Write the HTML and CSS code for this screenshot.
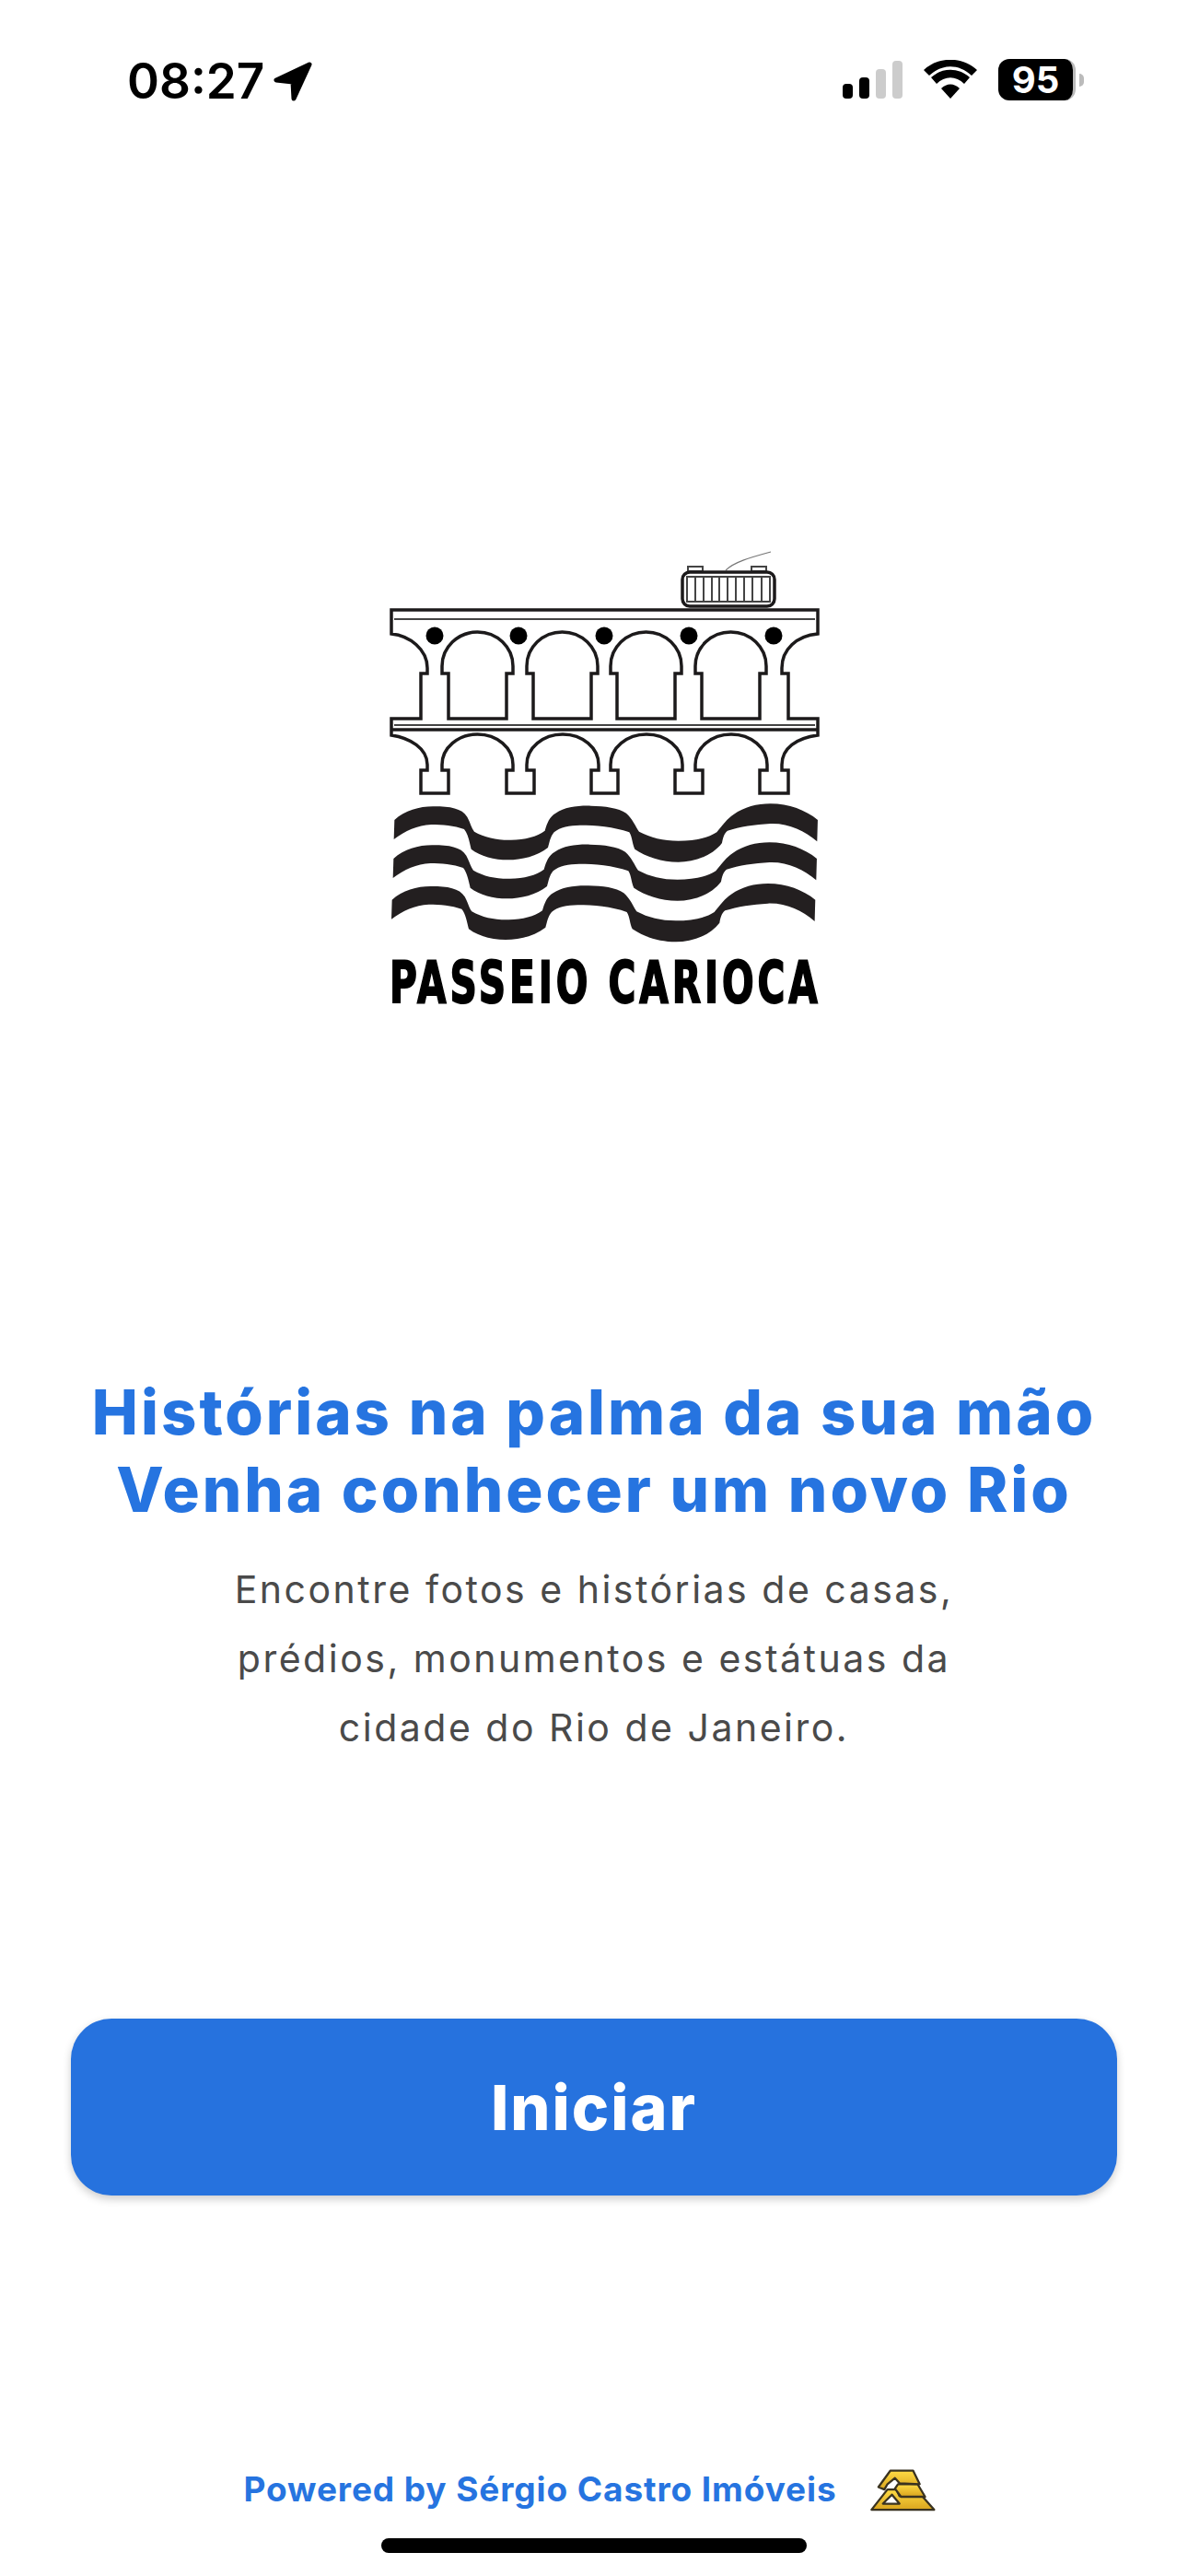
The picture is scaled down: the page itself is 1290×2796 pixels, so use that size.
FILE: index.html
```html
<!DOCTYPE html>
<html lang="pt-BR">
<head>
  <meta charset="UTF-8">
  <meta name="viewport" content="width=device-width, initial-scale=1.0">
  <title>Passeio Carioca</title>
  <link rel="stylesheet" href="styles.css">
</head>
<body>
  <div class="screen">
    <div class="status">
      <div class="status-left">
        <span class="time">08:27</span>
        <svg class="arrow" viewBox="0 0 44 44"><path d="M39 4 L3 21 L21 23 L22 41 Z"/></svg>
      </div>
      <div class="status-right">
        <svg class="signal" viewBox="0 0 65 41">
          <rect x="0" y="25" width="11" height="16" rx="4"/>
          <rect x="18" y="18" width="11" height="23" rx="4"/>
          <rect class="off" x="36" y="9" width="11" height="32" rx="4"/>
          <rect class="off" x="54" y="0" width="11" height="41" rx="4"/>
        </svg>
        <svg class="wifi" viewBox="0 0 58 42">
          <path d="M29 42 L19 31 C25 25 33 25 39 31 Z"/>
          <path d="M14 26 L8 19 C20 8 38 8 50 19 L44 26 C35 17 23 17 14 26 Z"/>
          <path d="M6 17 L0 11 C16 -4 42 -4 58 11 L52 17 C38 4 20 4 6 17 Z"/>
        </svg>
        <div class="battery"><span class="battery-level">95</span><span class="battery-cap"></span></div>
      </div>
    </div>

    <svg class="logo" viewBox="-5 0 500 530">
      <g class="tram">
        <path class="cable" d="M388 39 C397 30 415 25 437 19"/>
        <rect class="thin" x="347" y="35" width="16" height="5"/>
        <rect class="thin" x="416" y="35" width="16" height="5"/>
        <rect x="341" y="41" width="100" height="37" rx="8"/>
        <path class="thin" d="M346 46 H436 V73 H346 Z M355 46 V73 M364 46 V73 M373 46 V73 M381 46 V73 M390 46 V73 M399 46 V73 M408 46 V73 M417 46 V73 M427 46 V73"/>
      </g>
      <g class="bridge">
        <path d="M25 82 H488 V108 C465 110 449 125 449 145 V151 H456 V200 H488 V218 C465 221 449 232 449 250 V256 H456 V281 H425 V256 H433 V250 A39 33 0 0 0 355 250 V256 H363 V281 H333 V256 H341 V250 A39 33 0 0 0 263 250 V256 H271 V281 H242 V256 H250 V250 A39 33 0 0 0 172 250 V256 H180 V281 H150 V256 H157 V250 A38.5 33 0 0 0 80 250 V256 H87 V281 H57 V256 H64 V250 C64 232 45 221 25 218 V200 H57 V151 H64 V145 C64 125 45 110 25 108 Z"/>
        <path class="thin" d="M28 92 H485 M28 207 H485"/>
        <path d="M25 212 H488"/>
        <path id="arch" d="M80 151 H87 V200 H150 V151 H157 V143 A38.5 37 0 0 0 80 143 Z"/>
        <use href="#arch" x="92"/>
        <use href="#arch" x="183"/>
        <use href="#arch" x="275"/>
      </g>
      <g class="dots">
        <circle cx="72" cy="110" r="9.5"/>
        <circle cx="163" cy="110" r="9.5"/>
        <circle cx="256" cy="110" r="9.5"/>
        <circle cx="348" cy="110" r="9.5"/>
        <circle cx="440" cy="110" r="9.5"/>
      </g>
      <g class="waves" transform="translate(0 260) scale(.3333)">
        <path id="wave" d="M85 150 C120 118 170 105 215 106 C265 106 305 112 322 140 C332 158 335 175 345 188 C380 208 420 216 465 215 C510 214 550 205 575 185 C582 160 590 140 610 128 C640 108 680 103 725 104 C770 105 815 110 840 128 C860 145 870 170 882 188 C920 208 960 218 1010 218 C1060 218 1105 210 1135 190 C1155 165 1170 145 1190 132 C1225 108 1265 97 1310 97 C1370 97 1425 118 1464 150 L1462 220 C1420 185 1370 160 1310 162 C1260 165 1210 172 1170 185 C1158 195 1155 210 1152 225 C1120 268 1060 287 1010 287 C955 287 905 270 868 245 C860 230 860 205 850 190 C800 172 740 167 690 167 C655 168 625 172 605 190 C592 205 590 225 585 240 C550 268 500 280 455 280 C410 280 365 268 335 245 C330 225 325 195 312 180 C280 168 240 165 205 165 C160 167 120 185 83 213 Z"/>
        <use href="#wave" x="-3" y="126"/>
        <use href="#wave" x="-8" y="260"/>
      </g>
      <text class="logo-name" transform="translate(23 508) scale(.647 1)">PASSEIO CARIOCA</text>
    </svg>

    <h1 class="title">Histórias na palma da sua mão<br>Venha conhecer um novo Rio</h1>
    <p class="lead">Encontre fotos e histórias de casas,<br>prédios, monumentos e estátuas da<br>cidade do Rio de Janeiro.</p>

    <button class="start">Iniciar</button>

    <div class="powered">
      <span class="powered-text">Powered by Sérgio Castro Imóveis</span>
      <svg class="powered-logo" viewBox="65 45 220 145">
        <defs>
          <linearGradient id="gold" x1="0" y1="0" x2="0" y2="1">
            <stop offset="0" stop-color="#ffdc45"/>
            <stop offset="1" stop-color="#d9a41e"/>
          </linearGradient>
        </defs>
        <path d="M72 185 L125 118 L155 118 L165 140 L240 140 L280 185 Z M110 165 L165 165 L140 135 Z" fill-rule="evenodd"/>
        <path d="M160 100 L225 100 L250 142 L170 142 L150 115 Z"/>
        <path d="M95 110 L135 55 L210 55 L232 100 L165 97 L150 80 L125 100 L115 118 Z"/>
      </svg>
    </div>

    <div class="home-bar"></div>
  </div>
</body>
</html>
```

FILE: styles.css
```css
* {
  box-sizing: border-box;
}
body {
  margin: 0;
  background: #ffffff;
  font-family: Inter, "Liberation Sans", sans-serif;
}
.screen {
  width: 1290px;
  height: 2796px;
  display: flex;
  flex-direction: column;
  align-items: center;
  overflow: hidden;
}

/* status bar */
.status {
  width: 100%;
  height: 140px;
  padding: 60px 113px 0 138px;
  display: flex;
  justify-content: space-between;
  align-items: flex-start;
}
.status-left {
  display: flex;
  align-items: center;
  gap: 10px;
  height: 56px;
}
.time {
  font-size: 53px;
  line-height: 56px;
  font-weight: 600;
  color: #000;
}
.arrow {
  width: 44px;
  height: 44px;
  fill: #000;
  stroke: #000;
  stroke-width: 5;
  stroke-linejoin: round;
}
.status-right {
  display: flex;
  align-items: flex-start;
  gap: 23px;
  padding-top: 4px;
}
.signal {
  width: 65px;
  height: 41px;
  margin-top: 2px;
  fill: #000;
}
.signal .off {
  fill: #cccccc;
}
.wifi {
  width: 58px;
  height: 42px;
  margin-top: 1px;
  fill: #000;
}
.battery {
  display: flex;
  align-items: center;
  gap: 4px;
}
.battery-level {
  width: 84px;
  height: 45px;
  border-radius: 12px;
  background: #000;
  border-right: 3px solid #bbbbbb;
  color: #fff;
  font-size: 40px;
  line-height: 45px;
  font-weight: 700;
  text-align: center;
}
.battery-cap {
  width: 5px;
  height: 14px;
  background: #bbbbbb;
  border-radius: 0 5px 5px 0;
}

/* logo */
.logo {
  width: 500px;
  height: 530px;
  margin-top: 440px;
  flex: none;
}
.tram rect,
.tram path,
.bridge path,
.bridge use {
  fill: none;
  stroke: #1c1a1b;
  stroke-width: 3.5;
}
.tram .thin,
.bridge .thin {
  stroke-width: 2;
  stroke: #444;
}
.tram .cable {
  stroke: #777;
  stroke-width: 1.2;
}
.dots {
  fill: #000;
}
.waves {
  fill: #231f20;
}
.logo-name {
  font-family: "DejaVu Sans", sans-serif;
  font-size: 63px;
  font-weight: 700;
  letter-spacing: 6px;
  fill: #000;
  stroke: #000;
  stroke-width: 2;
}

/* text */
.title {
  margin: 381px 0 0;
  font-size: 67px;
  line-height: 84px;
  font-weight: 800;
  letter-spacing: 3px;
  text-align: center;
  color: #2674e0;
}
.lead {
  margin: 29px 0 0;
  font-size: 41px;
  line-height: 75px;
  font-weight: 400;
  letter-spacing: 2.5px;
  text-align: center;
  color: #4a4a4a;
}

/* button */
.start {
  width: 1136px;
  height: 192px;
  margin-top: 278px;
  border: 0;
  border-radius: 44px;
  background: #2672de;
  box-shadow: 0 4px 10px rgba(0, 0, 0, 0.2);
  color: #fff;
  font-family: inherit;
  font-size: 68px;
  font-weight: 800;
  letter-spacing: 2px;
}

/* footer */
.powered {
  margin-top: 294px;
  padding-right: 10px;
  height: 50px;
  display: flex;
  align-items: center;
  gap: 35px;
}
.powered-text {
  font-size: 37px;
  line-height: 50px;
  font-weight: 700;
  letter-spacing: 0.9px;
  color: #2674e0;
}
.powered-logo {
  width: 72px;
  height: 48px;
  fill: url(#gold);
  stroke: #3a3320;
  stroke-width: 7;
  stroke-linejoin: round;
}
.home-bar {
  width: 462px;
  height: 16px;
  margin-top: 28px;
  border-radius: 8px;
  background: #000;
  flex: none;
}
```
